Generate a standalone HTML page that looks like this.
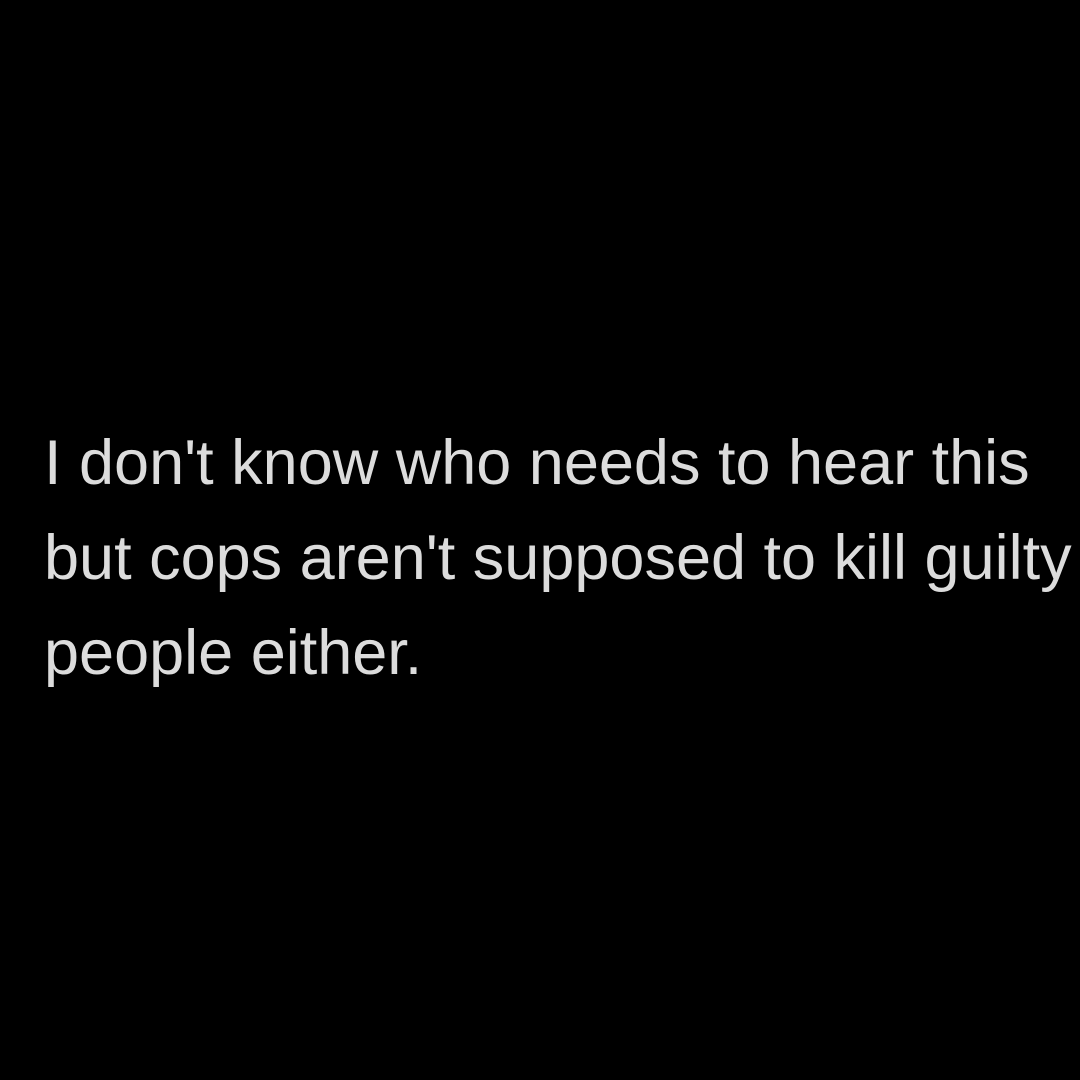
<!DOCTYPE html>
<html><head><meta charset="utf-8"><style>
html,body{margin:0;padding:0;background:#000;width:1080px;height:1080px;overflow:hidden}
.t{position:absolute;left:44px;top:416px;font-family:"Liberation Sans",sans-serif;font-size:63px;line-height:95px;color:#dcdcdc;white-space:nowrap;letter-spacing:0px}
</style></head><body>
<div class="t">I don't know who needs to hear this<br>but cops aren't supposed to kill guilty<br>people either.</div>
</body></html>
